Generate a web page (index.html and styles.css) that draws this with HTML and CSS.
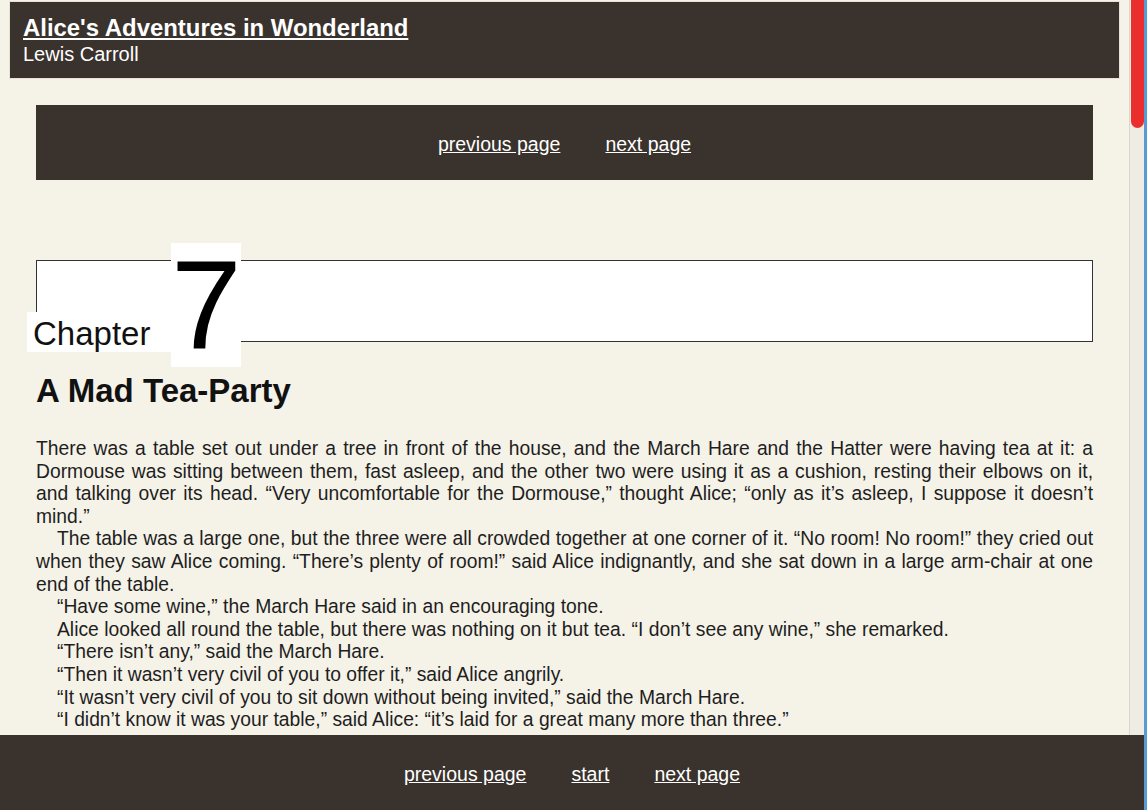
FILE: index.html
```html
<!DOCTYPE html>
<html lang="en">
<head>
<meta charset="utf-8">
<title>Alice's Adventures in Wonderland — Chapter 7</title>
<link rel="stylesheet" href="styles.css">
</head>
<body>
<div class="window">
  <div class="viewport">
    <div class="scroller">
      <header class="book-header">
        <a class="book-title" href="#">Alice's Adventures in Wonderland</a>
        <div class="book-author">Lewis Carroll</div>
      </header>
      <main class="content">
        <nav class="pager pager-top">
          <a href="#">previous page</a>
          <a href="#">next page</a>
        </nav>
        <div class="chapter-box">
          <div class="chapter-label"><span class="chapter-word">Chapter</span><span class="chapter-num">7</span></div>
        </div>
        <h2 class="chapter-title">A Mad Tea-Party</h2>
        <div class="text">
          <p class="first">There was a table set out under a tree in front of the house, and the March Hare and the Hatter were having tea at it: a Dormouse was sitting between them, fast asleep, and the other two were using it as a cushion, resting their elbows on it, and talking over its head. “Very uncomfortable for the Dormouse,” thought Alice; “only as it’s asleep, I suppose it doesn’t mind.”</p>
          <p>The table was a large one, but the three were all crowded together at one corner of it. “No room! No room!” they cried out when they saw Alice coming. “There’s plenty of room!” said Alice indignantly, and she sat down in a large arm-chair at one end of the table.</p>
          <p>“Have some wine,” the March Hare said in an encouraging tone.</p>
          <p>Alice looked all round the table, but there was nothing on it but tea. “I don’t see any wine,” she remarked.</p>
          <p>“There isn’t any,” said the March Hare.</p>
          <p>“Then it wasn’t very civil of you to offer it,” said Alice angrily.</p>
          <p>“It wasn’t very civil of you to sit down without being invited,” said the March Hare.</p>
          <p>“I didn’t know it was your table,” said Alice: “it’s laid for a great many more than three.”</p>
        </div>
      </main>
    </div>
    <div class="scrollbar"><div class="thumb"></div></div>
  </div>
  <footer class="pager pager-bottom">
    <a href="#">previous page</a>
    <a href="#">start</a>
    <a href="#">next page</a>
  </footer>
</div>
</body>
</html>
```
FILE: styles.css
```css
html, body {
  margin: 0;
  padding: 0;
  height: 100%;
  overflow: hidden;
}
body {
  background: #f5f2e8;
  font-family: "Liberation Sans", Arial, sans-serif;
  color: #1e1e1e;
}
.window {
  height: 810px;
  display: flex;
  flex-direction: column;
  border-right: 3px solid #5b9bd5;
  box-sizing: border-box;
}
.viewport {
  height: 735px;
  flex: none;
  display: flex;
  flex-direction: row;
  overflow: hidden;
}
.scroller {
  flex: 1;
  overflow: hidden;
  padding-top: 1px;
}
.scrollbar {
  width: 15px;
  background: #efece3;
  border-left: 1px solid #d9d6cd;
  box-sizing: border-box;
  padding-left: 1px;
}
.thumb {
  height: 128px;
  background: #ea2e2e;
  border-radius: 0 0 7px 7px;
}
.book-header {
  margin: 0 9px;
  background: #3a322c;
  border: 1px solid #e6e2d6;
  height: 78px;
  box-sizing: border-box;
  padding: 12px 13px 0;
  color: #fff;
}
.book-title {
  display: block;
  color: #fff;
  font-weight: bold;
  font-size: 23.9px;
  line-height: 28px;
  text-decoration: underline;
  width: max-content;
}
.book-author {
  font-size: 20px;
  line-height: 24px;
}
.content {
  padding: 26px 36px 0;
}
.pager {
  display: flex;
  justify-content: center;
  align-items: center;
  gap: 45px;
  background: #3a322c;
}
.pager a {
  color: #fff;
  font-size: 19.5px;
  text-decoration: underline;
}
.pager-top {
  height: 75px;
  padding-top: 3px;
  box-sizing: border-box;
}
.pager-bottom {
  flex: none;
  height: 75px;
  padding-top: 4px;
  box-sizing: border-box;
}
.chapter-box {
  margin-top: 80px;
  height: 82px;
  box-sizing: border-box;
  background: #fff;
  border: 1px solid #333;
  position: relative;
}
.chapter-label {
  position: absolute;
  left: -10px;
  top: -18px;
  display: flex;
  align-items: flex-end;
}
.chapter-word {
  display: block;
  background: #fff;
  font-size: 33px;
  line-height: 40px;
  padding: 2px 0 0 6px;
  height: 40px;
  width: 144px;
  box-sizing: border-box;
  margin-bottom: 15px;
  color: #111;
}
.chapter-num {
  display: block;
  background: #fff;
  font-size: 127px;
  line-height: 124px;
  height: 124px;
  width: 70px;
  text-align: center;
  color: #000;
}
.chapter-title {
  margin: 30px 0 0;
  font-size: 33px;
  font-weight: bold;
  line-height: 37px;
  color: #111;
}
.text {
  margin-top: 29px;
  font-size: 19.3px;
  line-height: 22.6px;
  text-align: justify;
}
.text p {
  margin: 0;
  text-indent: 21px;
}
.text p.first {
  text-indent: 0;
}
```
